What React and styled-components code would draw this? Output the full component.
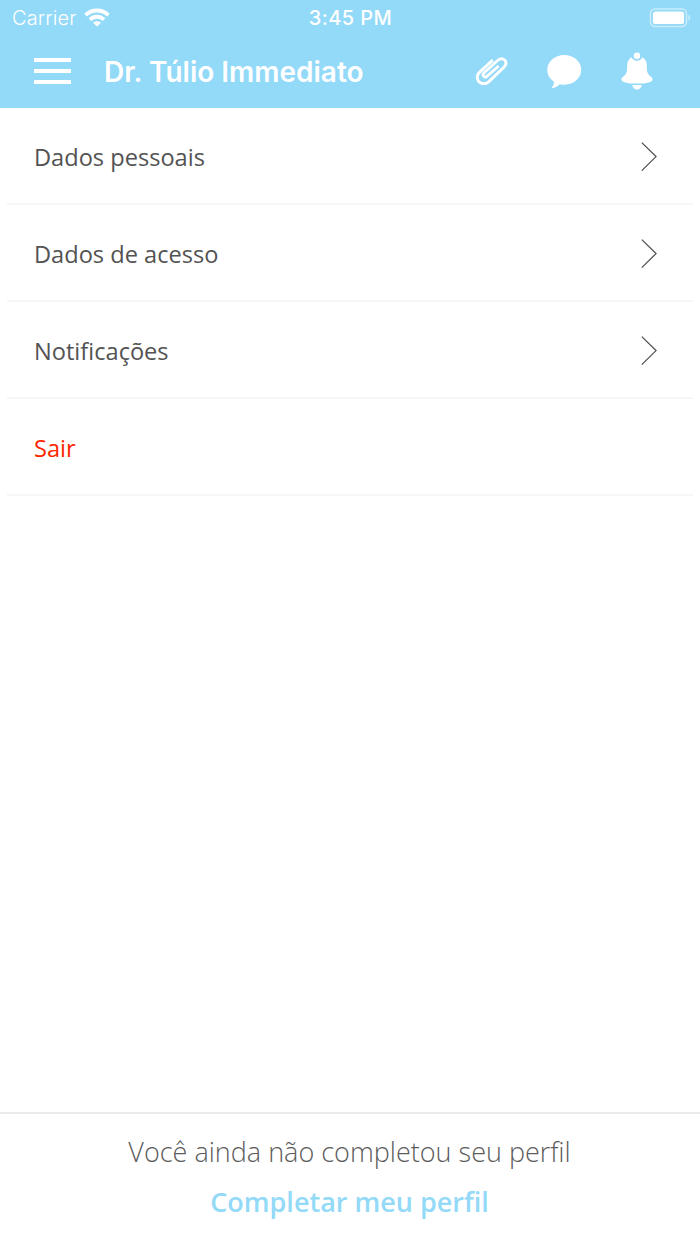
import React from 'react';
import styled, { createGlobalStyle } from 'styled-components';

const GlobalStyle = createGlobalStyle`
  body {
    margin: 0;
    background-color: #fff;
  }
`;

const Screen = styled.div`
  display: flex;
  flex-direction: column;
  width: 700px;
  height: 1244px;
  overflow: hidden;
  background-color: #fff;
  font-family: 'Open Sans', 'Noto Sans', sans-serif;
`;

const Header = styled.header`
  height: 108px;
  background-color: #93d9f8;
  color: #fff;
  font-family: Inter, Roboto, sans-serif;
`;

const StatusBar = styled.div`
  display: grid;
  grid-template-columns: 1fr auto 1fr;
  align-items: center;
  height: 36px;
  padding: 0 9px 0 12px;
`;

const Network = styled.div`
  display: flex;
  align-items: center;
  gap: 8px;
`;

const Carrier = styled.span`
  font-size: 20px;
  line-height: 36px;
  font-weight: 300;
  letter-spacing: 0.1px;
`;

const Time = styled.span`
  margin-right: 2px;
  font-size: 20px;
  line-height: 36px;
  font-weight: 500;
  letter-spacing: 0.45px;
`;

const Wifi = styled.svg`
  margin-bottom: 2px;
`;

const Battery = styled.svg`
  justify-self: end;
  margin-bottom: 1px;
`;

const NavBar = styled.div`
  display: flex;
  align-items: center;
  height: 72px;
  padding: 0 47px 0 34px;
`;

const Hamburger = styled.div`
  display: flex;
  flex-direction: column;
  justify-content: space-between;
  width: 37px;
  height: 26px;
  margin-top: -2px;
`;

const Bar = styled.span`
  height: 4px;
  background-color: #fff;
`;

const Title = styled.h1`
  flex: 1;
  margin: 0 0 0 33px;
  font-size: 28px;
  line-height: 36px;
  font-weight: 600;
  letter-spacing: 0;
  white-space: nowrap;
`;

const Actions = styled.div`
  display: flex;
  align-items: center;
  gap: 38px;
  margin-top: -2px;
`;

const Menu = styled.ul`
  flex: 1;
  margin: 0;
  padding: 0 7px;
  list-style: none;
`;

const Item = styled.li`
  display: flex;
  align-items: center;
  justify-content: space-between;
  box-sizing: border-box;
  height: 97px;
  padding: 2px 36px 0 27px;
  border-bottom: 2px solid #f6f6f6;
  color: ${props => (props.$danger ? '#ff2600' : '#535353')};
`;

const Label = styled.span`
  font-size: 23.6px;
  line-height: 34px;
  white-space: nowrap;
`;

const Footer = styled.footer`
  box-sizing: border-box;
  height: 132px;
  padding: 16px 1px 0 0;
  border-top: 2px solid #ebebeb;
  text-align: center;
`;

const Message = styled.p`
  margin: 0;
  font-size: 27px;
  line-height: 44px;
  font-weight: 300;
  color: #5c5c5c;
  white-space: nowrap;
`;

const Link = styled.a`
  display: block;
  margin-top: 8px;
  font-size: 27px;
  line-height: 40px;
  font-weight: 600;
  color: #93d9f8;
  white-space: nowrap;
`;

const WifiIcon = () => (
  <Wifi width="26" height="19" viewBox="0 0 26 19" fill="none" stroke="#fff" strokeWidth="3.8">
    <path d="M1.6 7.2C8 .9 18 .9 24.4 7.2" />
    <path d="M6 11.6c4-3.8 10-3.8 14 0" />
    <path d="M13 18.6l-3.9-3.9c2.3-2 5.5-2 7.8 0z" fill="#fff" stroke="none" />
  </Wifi>
);

const BatteryIcon = () => (
  <Battery width="42" height="20" viewBox="0 0 42 20">
    <rect x="1.5" y="1" width="36" height="17.5" rx="4.5" fill="none" stroke="#c9ecfb" strokeWidth="1.6" />
    <rect x="4" y="3.5" width="31" height="12.5" rx="2.6" fill="#fff" />
    <path d="M39.5 6.7c2.2 1 2.2 5.2 0 6.2z" fill="#c9ecfb" />
  </Battery>
);

const ClipIcon = () => (
  <svg width="34" height="32" viewBox="44 44 105 99" fill="none" stroke="#fff" strokeWidth="9">
    <path d="M99 60L58 97c-9 9-9 22-2 30s21 8 30 0l48-46c7-8 8-15 2-21s-14-6-22 1L72 99c-4 4-4 8-1 11s7 3 11-1l35-31" />
  </svg>
);

const ChatIcon = () => (
  <svg width="36" height="34" viewBox="0.7 -0.5 36 34" fill="#fff">
    <path d="M18 .5C8.6.5 1 7.1 1 15.3c0 5.2 2.7 9.2 6.5 11.8.5 2-.4 4.3-2.3 6.3 3.2.1 6-1.4 8.2-3.7 1.5.4 3 .5 4.6.5 9.400 0 17-6.600 17-14.900S27.400.5 18 .5z" />
  </svg>
);

const BellIcon = () => (
  <svg width="32" height="38" viewBox="0 0 32 38" fill="#fff">
    <path d="M10.6 5.3c.9 2.1 2.9 3.4 5.4 3.4s4.5-1.3 5.4-3.4c2.7 1.5 4.4 4.3 4.4 7.7 0 6.5.4 8.700 3.3 11.1 1.4 1.1 2.4 1.8 2.4 3.3 0 2.5-5.4 4.2-15.5 4.2S.5 29.9.5 27.4c0-1.5 1-2.2 2.4-3.3C5.8 21.7 6.2 19.5 6.2 13c0-3.4 1.7-6.2 4.4-7.7z" />
    <circle cx="16" cy="3.8" r="3.2" />
    <path d="M11.3 32.9h9.4c-.4 2.8-2.2 4.6-4.7 4.6s-4.3-1.8-4.7-4.6z" />
  </svg>
);

const ArrowIcon = () => (
  <svg width="16" height="30" viewBox="0 0.4 16 30" fill="none" stroke="#535353" strokeWidth="1.3">
    <path d="M.8 1L15 15 .8 29" />
  </svg>
);

const items = [
  { label: 'Dados pessoais' },
  { label: 'Dados de acesso' },
  { label: 'Notificações' },
  { label: 'Sair', danger: true },
];

const App = () => (
  <Screen>
    <GlobalStyle />
    <Header>
      <StatusBar>
        <Network>
          <Carrier>Carrier</Carrier>
          <WifiIcon />
        </Network>
        <Time>3:45 PM</Time>
        <BatteryIcon />
      </StatusBar>
      <NavBar>
        <Hamburger>
          <Bar />
          <Bar />
          <Bar />
        </Hamburger>
        <Title>Dr. Túlio Immediato</Title>
        <Actions>
          <ClipIcon />
          <ChatIcon />
          <BellIcon />
        </Actions>
      </NavBar>
    </Header>
    <Menu>
      {items.map(item => (
        <Item key={item.label} $danger={item.danger}>
          <Label>{item.label}</Label>
          {!item.danger && <ArrowIcon />}
        </Item>
      ))}
    </Menu>
    <Footer>
      <Message>Você ainda não completou seu perfil</Message>
      <Link>Completar meu perfil</Link>
    </Footer>
  </Screen>
);

export default App;
